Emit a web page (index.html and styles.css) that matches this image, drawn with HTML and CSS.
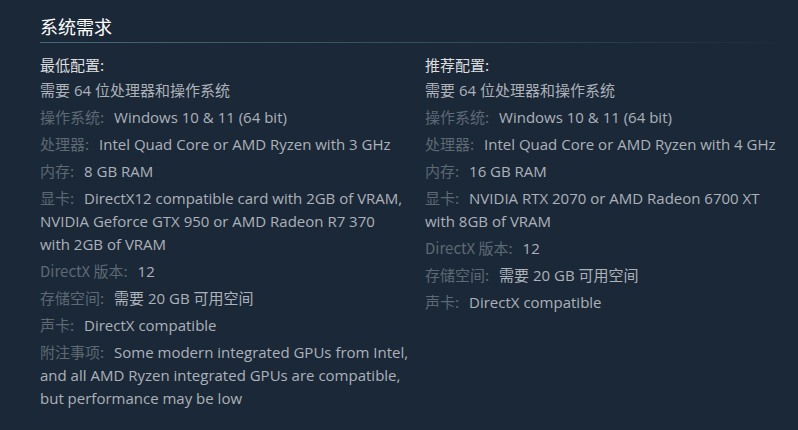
FILE: index.html
```html
<!DOCTYPE html>
<html lang="zh-CN">
<head>
<meta charset="utf-8">
<link rel="stylesheet" href="styles.css">
</head>
<body>
<section class="sysreq">
  <h2 class="sysreq-title">系统需求</h2>
  <div class="sysreq-cols">
    <div class="col">
      <div class="col-title">最低配置:</div>
      <ul class="req-list">
        <li>需要 64 位处理器和操作系统</li>
        <li><span class="lbl">操作系统:</span> Windows 10 &amp; 11 (64 bit)</li>
        <li><span class="lbl">处理器:</span> Intel Quad Core or AMD Ryzen with 3 GHz</li>
        <li><span class="lbl">内存:</span> 8 GB RAM</li>
        <li><span class="lbl">显卡:</span> DirectX12 compatible card with 2GB of VRAM, NVIDIA Geforce GTX 950 or AMD Radeon R7 370<br>with 2GB of VRAM</li>
        <li><span class="lbl">DirectX 版本:</span> 12</li>
        <li><span class="lbl">存储空间:</span> 需要 20 GB 可用空间</li>
        <li><span class="lbl">声卡:</span> DirectX compatible</li>
        <li><span class="lbl">附注事项:</span> Some modern integrated GPUs from Intel, and all AMD Ryzen integrated GPUs are compatible, but performance may be low</li>
      </ul>
    </div>
    <div class="col">
      <div class="col-title">推荐配置:</div>
      <ul class="req-list">
        <li>需要 64 位处理器和操作系统</li>
        <li><span class="lbl">操作系统:</span> Windows 10 &amp; 11 (64 bit)</li>
        <li><span class="lbl">处理器:</span> Intel Quad Core or AMD Ryzen with 4 GHz</li>
        <li><span class="lbl">内存:</span> 16 GB RAM</li>
        <li><span class="lbl">显卡:</span> NVIDIA RTX 2070 or AMD Radeon 6700 XT<br>with 8GB of VRAM</li>
        <li><span class="lbl">DirectX 版本:</span> 12</li>
        <li><span class="lbl">存储空间:</span> 需要 20 GB 可用空间</li>
        <li><span class="lbl">声卡:</span> DirectX compatible</li>
      </ul>
    </div>
  </div>
</section>
</body>
</html>
```
FILE: styles.css
```css
html, body {
  margin: 0;
  padding: 0;
  background: #1b2838;
  height: 100%;
  overflow: hidden;
}
body {
  font-family: "Open Sans", "Noto Sans CJK SC", sans-serif;
  font-size: 15px;
  color: #acb2b8;
}
.sysreq {
  padding: 12px 0 0 40px;
  width: 760px;
}
.sysreq-title {
  margin: 0;
  font-family: "Noto Sans CJK SC", sans-serif;
  font-weight: 400;
  font-size: 18px;
  line-height: 28px;
  color: #ffffff;
  padding-bottom: 3px;
  background-image: linear-gradient(to right, #45687b 0%, #2f4a5a 60%, rgba(27,40,56,0) 100%);
  background-size: 100% 1px;
  background-repeat: no-repeat;
  background-position: left bottom;
}
.sysreq-cols {
  display: grid;
  grid-template-columns: 375px 375px;
  column-gap: 10px;
  margin-top: 12px;
}
.col-title {
  color: #dcdedf;
  line-height: 20px;
  margin-bottom: 4px;
  font-family: "Noto Sans CJK SC", sans-serif;
}
.req-list {
  list-style: none;
  margin: 0;
  padding: 0;
}
.req-list li {
  line-height: 23px;
  margin-bottom: 3px;
}
.lbl {
  color: #5d6973;
  margin-right: 6px;
  font-family: "Noto Sans CJK SC", sans-serif;
}
```
